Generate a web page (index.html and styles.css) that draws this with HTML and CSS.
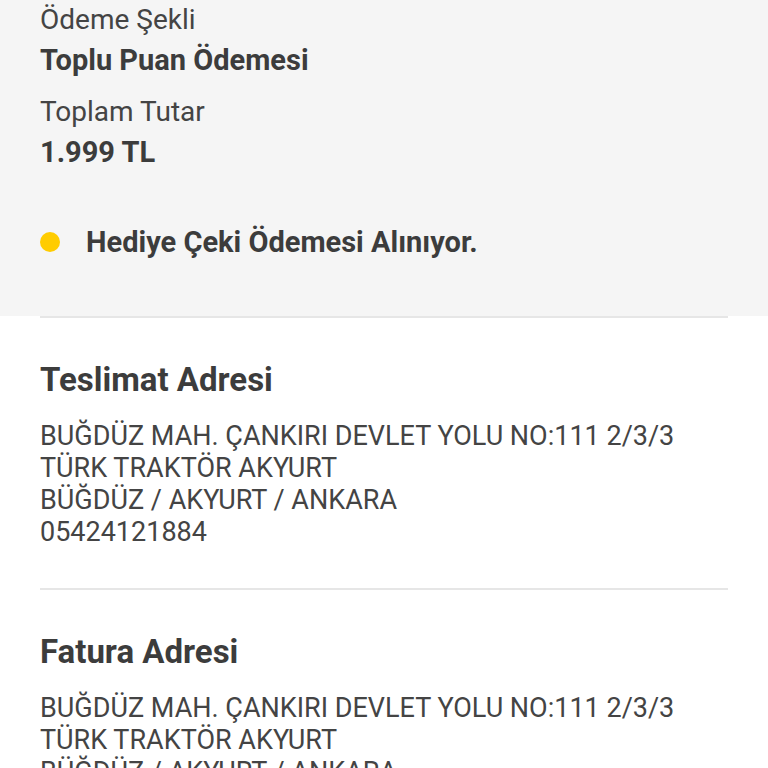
FILE: index.html
```html
<!DOCTYPE html>
<html lang="tr">
<head>
    <meta charset="UTF-8">
    <meta name="viewport" content="width=device-width, initial-scale=1.0">
    <title>Sipariş Detayı</title>
    <link rel="stylesheet" href="styles.css">
</head>
<body>

<div class="summary">
    <div class="field">
        <div class="field-label">Ödeme Şekli</div>
        <div class="field-value">Toplu Puan Ödemesi</div>
    </div>
    <div class="field">
        <div class="field-label">Toplam Tutar</div>
        <div class="field-value">1.999 TL</div>
    </div>

    <div class="status">
        <span class="status-dot"></span>
        <span class="status-text">Hediye Çeki Ödemesi Alınıyor.</span>
    </div>
</div>

<div class="section">
    <h2 class="section-title">Teslimat Adresi</h2>
    <div class="address">
        <div>BUĞDÜZ MAH. ÇANKIRI DEVLET YOLU NO:111 2/3/3</div>
        <div>TÜRK TRAKTÖR AKYURT</div>
        <div>BÜĞDÜZ / AKYURT / ANKARA</div>
        <div>05424121884</div>
    </div>
</div>

<div class="section">
    <h2 class="section-title">Fatura Adresi</h2>
    <div class="address">
        <div>BUĞDÜZ MAH. ÇANKIRI DEVLET YOLU NO:111 2/3/3</div>
        <div>TÜRK TRAKTÖR AKYURT</div>
        <div>BÜĞDÜZ / AKYURT / ANKARA</div>
        <div>05424121884</div>
    </div>
</div>

</body>
</html>
```

FILE: styles.css
```css
body {
    font-family: Roboto, "Liberation Sans", sans-serif;
    background-color: #fff;
    color: #444;
    margin: 0;
    padding: 0;
}

/* üst gri alan */
.summary {
    background-color: #f5f5f5;
    padding: 0 40px;
    height: 316px;
}

.field {
    margin-bottom: 12px;
}

.field-label {
    font-size: 28px;
    line-height: 40px;
}

.field-value {
    font-size: 29px;
    line-height: 40px;
    font-weight: bold;
    color: #3c3c3c;
}

.status {
    display: flex;
    align-items: center;
    gap: 26px;
    margin-top: 50px;
    height: 40px;
}

.status-dot {
    width: 20px;
    height: 20px;
    border-radius: 50%;
    background-color: #ffcc00;
}

.status-text {
    font-size: 29px;
    font-weight: bold;
    color: #3c3c3c;
}

/* adres bölümleri */
.section {
    margin: 0 40px;
    border-top: 2px solid #e6e6e6;
    padding-top: 40px;
    padding-bottom: 40px;
}

.section-title {
    margin: 0 0 18px;
    font-size: 33px;
    line-height: 44px;
    font-weight: bold;
    color: #3c3c3c;
}

.address {
    font-size: 27px;
    line-height: 32px;
}
```
